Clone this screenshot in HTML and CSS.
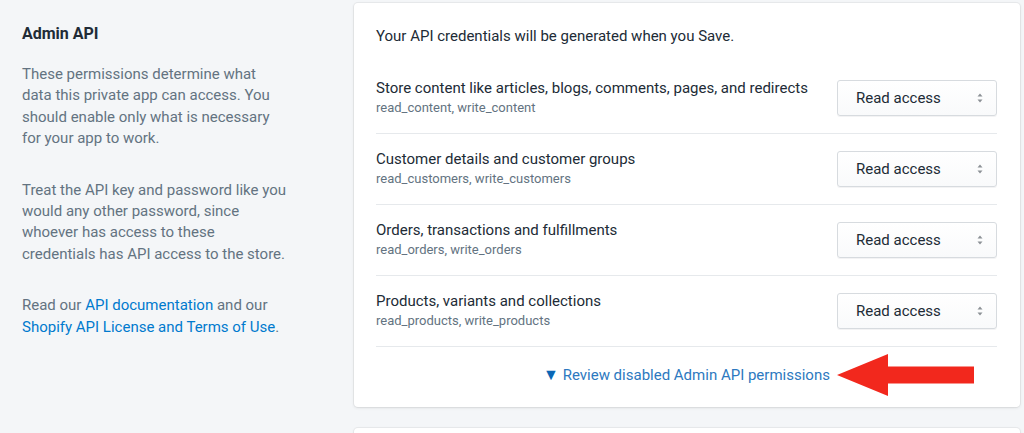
FILE: index.html
```html
<!DOCTYPE html>
<html lang="en">
<head>
<meta charset="utf-8">
<title>Admin API</title>
<link rel="stylesheet" href="styles.css">
</head>
<body>
<div class="page">
  <aside class="side">
    <h2 class="side-title">Admin API</h2>
    <p class="side-text">These permissions determine what<br>data this private app can access. You<br>should enable only what is necessary<br>for your app to work.</p>
    <p class="side-text">Treat the API key and password like you<br>would any other password, since<br>whoever has access to these<br>credentials has API access to the store.</p>
    <p class="side-text">Read our <a class="link" href="#">API documentation</a> and our<br><a class="link" href="#">Shopify API License and Terms of Use</a>.</p>
  </aside>
  <main class="main">
    <section class="card">
      <p class="card-intro">Your API credentials will be generated when you Save.</p>
      <div class="row">
        <div class="row-text">
          <div class="row-title">Store content like articles, blogs, comments, pages, and redirects</div>
          <div class="row-sub">read_content, write_content</div>
        </div>
        <div class="select"><span>Read access</span><svg class="caret" width="8" height="12" viewBox="0 0 8 12"><path d="M4 1.5 L6.5 4.5 H1.5 Z M4 10.5 L6.5 7.5 H1.5 Z" fill="#8c9196"/></svg></div>
      </div>
      <div class="row">
        <div class="row-text">
          <div class="row-title">Customer details and customer groups</div>
          <div class="row-sub">read_customers, write_customers</div>
        </div>
        <div class="select"><span>Read access</span><svg class="caret" width="8" height="12" viewBox="0 0 8 12"><path d="M4 1.5 L6.5 4.5 H1.5 Z M4 10.5 L6.5 7.5 H1.5 Z" fill="#8c9196"/></svg></div>
      </div>
      <div class="row">
        <div class="row-text">
          <div class="row-title">Orders, transactions and fulfillments</div>
          <div class="row-sub">read_orders, write_orders</div>
        </div>
        <div class="select"><span>Read access</span><svg class="caret" width="8" height="12" viewBox="0 0 8 12"><path d="M4 1.5 L6.5 4.5 H1.5 Z M4 10.5 L6.5 7.5 H1.5 Z" fill="#8c9196"/></svg></div>
      </div>
      <div class="row">
        <div class="row-text">
          <div class="row-title">Products, variants and collections</div>
          <div class="row-sub">read_products, write_products</div>
        </div>
        <div class="select"><span>Read access</span><svg class="caret" width="8" height="12" viewBox="0 0 8 12"><path d="M4 1.5 L6.5 4.5 H1.5 Z M4 10.5 L6.5 7.5 H1.5 Z" fill="#8c9196"/></svg></div>
      </div>
      <div class="card-foot">
        <a class="review" href="#"><span class="tri">&#9660;</span> Review disabled Admin API permissions</a>
        <svg class="annot" width="140" height="44" viewBox="0 0 140 44"><polygon points="0,21 51,0 51,12.5 137,12.5 137,29.5 51,29.5 51,42" fill="#f2281d"/></svg>
      </div>
    </section>
    <section class="card card-next"></section>
  </main>
</div>
</body>
</html>
```

FILE: styles.css
```css
* { box-sizing: border-box; }
html, body { margin: 0; padding: 0; }
body {
  background: #f4f6f8;
  font-family: Roboto, "Liberation Sans", Arial, sans-serif;
  color: #212b36;
  width: 1024px;
  height: 433px;
  overflow: hidden;
}
.page {
  display: grid;
  grid-template-columns: 354px 666px;
  padding-top: 3px;
}
.side {
  padding: 21px 0 0 22px;
}
.side-title {
  margin: 0 0 20px;
  font-size: 16px;
  line-height: 20px;
  font-weight: 700;
  color: #212b36;
}
.side-text {
  margin: 0 0 30px;
  font-size: 15px;
  line-height: 21.4px;
  color: #637381;
}
.link { color: #007ace; text-decoration: none; }
.card {
  position: relative;
  background: #fff;
  border-radius: 4px;
  box-shadow: 0 0 0 1px rgba(63,63,68,0.06), 0 1px 3px 0 rgba(63,63,68,0.12);
  padding: 23px 23px 0 22px;
}
.card-intro {
  margin: 0 0 17px;
  font-size: 15px;
  line-height: 20px;
}
.row {
  display: flex;
  align-items: center;
  justify-content: space-between;
  padding: 15px 0;
  border-bottom: 1px solid #e6e9ec;
}
.row-title { font-size: 15px; line-height: 20px; color: #212b36; }
.row-sub { font-size: 13px; line-height: 20px; color: #637381; }
.select {
  width: 160px;
  height: 36px;
  display: flex;
  align-items: center;
  justify-content: space-between;
  padding: 0 12px 0 18px;
  border: 1px solid #d7dbdf;
  border-radius: 3px;
  background: linear-gradient(#fff, #f9fafb);
  box-shadow: 0 1px 0 rgba(22,29,37,0.05);
  font-size: 15px;
  color: #212b36;
}
.card-foot {
  position: relative;
  height: 60px;
  padding-top: 18px;
  text-align: center;
}
.review {
  font-size: 15px;
  line-height: 20px;
  text-decoration: none;
  color: #2d79c0;
}
.tri { color: #0a67b6; font-size: 16px; line-height: 20px; }
.annot {
  position: absolute;
  left: 461px;
  top: 7px;
}
.card-next {
  margin-top: 21px;
  height: 5px;
  padding: 0;
  border-radius: 4px 4px 0 0;
}
```
